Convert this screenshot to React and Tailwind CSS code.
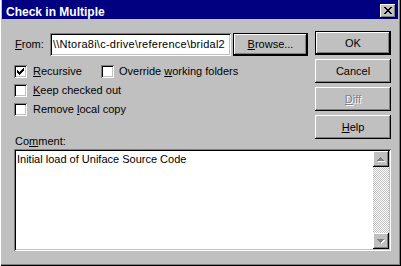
import React from 'react';

// Win9x bevels
const raised =
  'shadow-[inset_-1px_-1px_0_#000,inset_1px_1px_0_#fff,inset_-2px_-2px_0_#808080,inset_2px_2px_0_#c0c0c0]';
const sunken =
  'shadow-[inset_1px_1px_0_#808080,inset_-1px_-1px_0_#fff,inset_2px_2px_0_#000,inset_-2px_-2px_0_#c0c0c0]';

// rows: [y, x0, x1] -> pixel path
const pixels = (rows) => rows.map(([y, a, b]) => `M${a} ${y}h${b - a + 1}v1h-${b - a + 1}z`).join('');

const Button = ({ children, isDefault, disabled, className = '' }) => (
  <div
    className={`${className} bg-[#c0c0c0] ${raised} flex items-center justify-center ${
      isDefault ? 'border border-black' : ''
    } ${disabled ? 'text-[#808080] [text-shadow:1px_1px_0_#fff]' : 'text-black'}`}
  >
    <span>{children}</span>
  </div>
);

const Checkbox = ({ checked }) => (
  <div className={`w-[13px] h-[13px] bg-white ${sunken} shrink-0 relative`}>
    {checked && (
      <svg width="7" height="7" viewBox="0 0 7 7" className="absolute left-[3px] top-[3px]" shapeRendering="crispEdges">
        <path
          fill="#000"
          d={pixels([
            [0, 6, 6],
            [1, 5, 6],
            [2, 0, 0],
            [2, 4, 6],
            [3, 0, 1],
            [3, 3, 5],
            [4, 0, 4],
            [5, 1, 3],
            [6, 2, 2],
          ])}
        />
      </svg>
    )}
  </div>
);

const Arrow = ({ up }) => {
  const rows = up
    ? [[6, 7, 7], [7, 6, 8], [8, 5, 9], [9, 4, 10]]
    : [[6, 4, 10], [7, 5, 9], [8, 6, 8], [9, 7, 7]];
  const shadow = rows.map(([y, a, b]) => [y + 1, a + 1, b + 1]);
  return (
    <div className={`w-[16px] h-[16px] bg-[#c0c0c0] ${raised}`}>
      <svg width="16" height="16" viewBox="0 0 16 16" shapeRendering="crispEdges">
        <path fill="#fff" d={pixels(shadow)} />
        <path fill="#808080" d={pixels(rows)} />
      </svg>
    </div>
  );
};

const CheckRow = ({ children }) => <div className="flex items-center h-[19px]">{children}</div>;

export default function App() {
  return (
    <div className="w-[401px] h-[266px] bg-[#c0c0c0] pl-[2px] pr-[3px] pb-[3px] flex flex-col overflow-hidden shadow-[inset_1px_0_0_#fff,inset_-1px_-1px_0_#000,inset_-2px_-2px_0_#808080] font-['Liberation_Sans',Arial,sans-serif] text-[11px] leading-[13px] text-black">
      {/* title bar */}
      <div className="h-[19px] bg-[#000080] flex items-start justify-between pl-[4px] pr-[2px] shrink-0">
        <span className="mt-[6px] text-white font-bold text-[12px] leading-[12px]">Check in Multiple</span>
        <div className={`mt-[4px] w-[16px] h-[14px] bg-[#c0c0c0] ${raised}`}>
          <svg width="16" height="14" viewBox="0 0 16 14" shapeRendering="crispEdges">
            <path
              fill="#000"
              d={pixels([
                [3, 4, 5], [3, 10, 11],
                [4, 5, 6], [4, 9, 10],
                [5, 6, 9],
                [6, 7, 8],
                [7, 6, 9],
                [8, 5, 6], [8, 9, 10],
                [9, 4, 5], [9, 10, 11],
              ])}
            />
          </svg>
        </div>
      </div>

      <div className="flex-1 flex flex-col pl-[12px] pr-[7px] pt-[12px]">
        <div className="flex justify-between items-start">
          <div className="flex flex-col pt-[2px]">
            <div className="flex items-center h-[23px]">
              <span className="w-[36px] pl-[1px]">
                <u>F</u>rom:
              </span>
              <div className={`w-[181px] h-[23px] bg-white ${sunken} flex items-center pl-[3px] overflow-hidden whitespace-nowrap tracking-[0.25px]`}>
                {'\\\\Ntora8i\\c-drive\\reference\\bridal2'}
              </div>
              <Button isDefault className="ml-[2px] w-[75px] h-[23px]">
                <u>B</u>rowse...
              </Button>
            </div>

            <div className="flex flex-col mt-[6px]">
              <CheckRow>
                <div className="flex items-center gap-[6px] w-[87px]">
                  <Checkbox checked />
                  <span>
                    <u>R</u>ecursive
                  </span>
                </div>
                <div className="flex items-center gap-[5px]">
                  <Checkbox />
                  <span>
                    Override <u>w</u>orking folders
                  </span>
                </div>
              </CheckRow>
              <CheckRow>
                <div className="flex items-center gap-[6px]">
                  <Checkbox />
                  <span>
                    <u>K</u>eep checked out
                  </span>
                </div>
              </CheckRow>
              <CheckRow>
                <div className="flex items-center gap-[6px]">
                  <Checkbox />
                  <span>
                    Remove <u>l</u>ocal copy
                  </span>
                </div>
              </CheckRow>
            </div>

            <div className="mt-[16px] pl-[1px]">
              Co<u>m</u>ment:
            </div>
          </div>

          <div className="w-[76px] flex flex-col gap-[4px]">
            <Button isDefault className="h-[24px]">OK</Button>
            <Button className="h-[24px]">Cancel</Button>
            <Button disabled className="h-[24px]">
              <u>D</u>iff
            </Button>
            <Button className="h-[24px]">
              <u>H</u>elp
            </Button>
          </div>
        </div>

        <div className={`mt-[1px] h-[102px] bg-white ${sunken} p-[2px] flex`}>
          <div className="flex-1 pl-[1px] pt-[2px] whitespace-nowrap overflow-hidden">
            Initial load of Uniface Source Code
          </div>
          <div className="w-[16px] flex flex-col">
            <Arrow up />
            <div className="flex-1 bg-[image:conic-gradient(#fff_25%,#c0c0c0_0_50%,#fff_0_75%,#c0c0c0_0)] bg-[length:2px_2px]" />
            <Arrow />
          </div>
        </div>
      </div>
    </div>
  );
}
